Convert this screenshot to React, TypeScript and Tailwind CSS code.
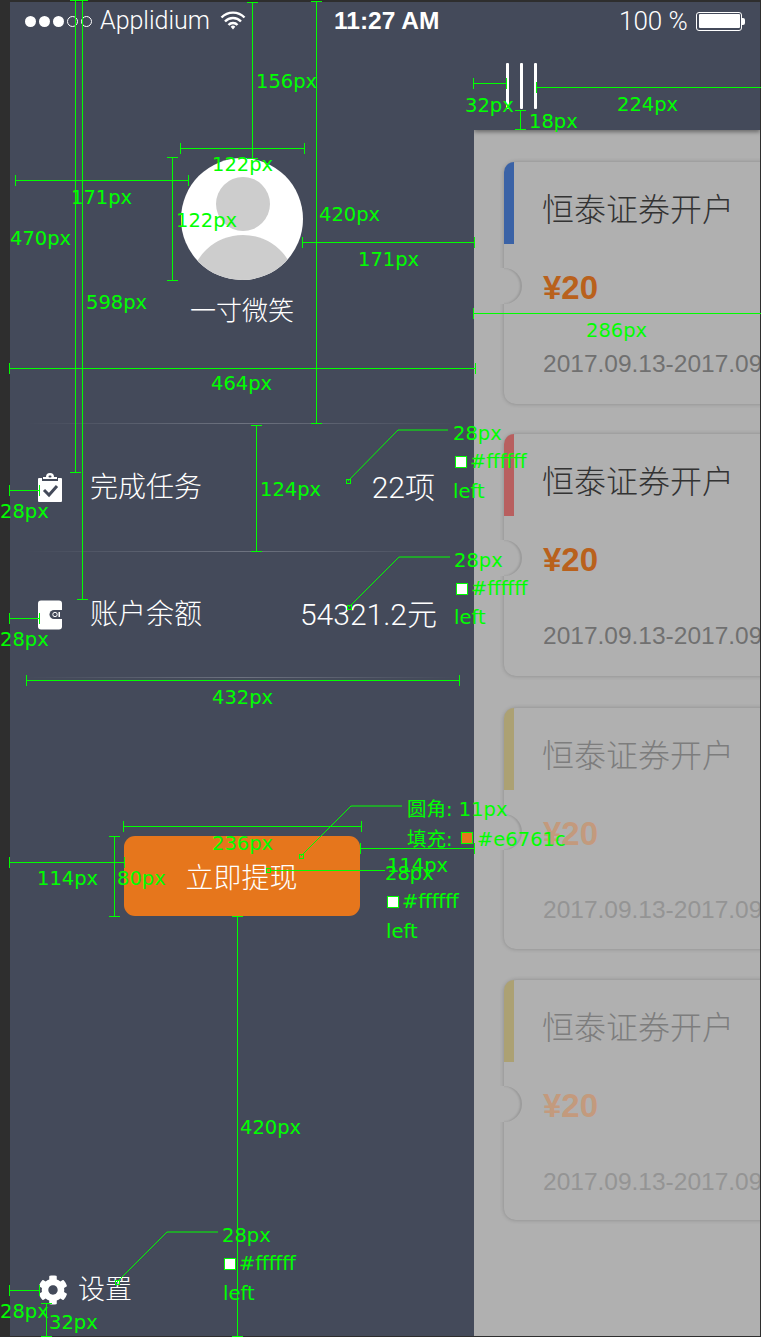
import { FaCog } from 'react-icons/fa';

const CJK = "font-['Liberation_Sans','Noto_Sans_CJK_SC',sans-serif]";
const LIGHT = "font-['Roboto','Noto_Sans_CJK_SC',sans-serif] font-light";

const CARDS = [
  { top: 'mt-[32px] h-[242px]', bar: 'bg-[#3a62a6]', title: 'text-[#333333]', price: 'text-[#b9611c]', date: 'text-[#707070]' },
  { top: 'mt-[30px] h-[242px]', bar: 'bg-[#b85f5f]', title: 'text-[#333333]', price: 'text-[#b9611c]', date: 'text-[#707070]' },
  { top: 'mt-[32px] h-[241px]', bar: 'bg-[#aca173]', title: 'text-[#7d7d7d]', price: 'text-[#c39a7d]', date: 'text-[#949494]' },
  { top: 'mt-[31px] h-[240px]', bar: 'bg-[#aca173]', title: 'text-[#7d7d7d]', price: 'text-[#c39a7d]', date: 'text-[#949494]' },
];

// measurement overlay
const V_LINES = [
  [75, 0, 472], [82, 0, 599], [252, 2, 158], [316, 1, 423], [256, 425, 551], [114, 836, 916],
  [237, 916, 1336], [46, 1303, 1336], [172, 157, 280], [520, 110, 129],
];
const H_LINES = [
  [148, 180, 304], [180, 15, 188], [242, 302, 474], [83, 473, 506], [87, 536, 761], [313, 473, 761],
  [368, 9, 475], [680, 26, 459], [490, 9, 39], [618, 9, 39], [862, 9, 124], [848, 360, 474], [826, 123, 361], [1290, 9, 39],
];
const LEADERS = [
  [348, 481, 398, 430, 448],
  [349, 607, 399, 557, 450],
  [301, 856, 351, 806, 402],
  [117, 1282, 167, 1232, 218],
];

const LABELS: [number, number, string][] = [
  [256, 70, '156px'], [212, 153, '122px'], [71, 186, '171px'], [176, 209, '122px'], [319, 203, '420px'],
  [10, 227, '470px'], [358, 248, '171px'], [86, 291, '598px'], [465, 94, '32px'], [617, 93, '224px'],
  [529, 110, '18px'], [586, 319, '286px'], [211, 372, '464px'], [453, 422, '28px'], [260, 478, '124px'],
  [0, 500, '28px'], [454, 549, '28px'], [0, 628, '28px'], [212, 686, '432px'], [212, 832, '236px'],
  [37, 867, '114px'], [117, 867, '80px'], [387, 854, '114px'], [385, 862, '28px'], [240, 1116, '420px'],
  [222, 1224, '28px'], [0, 1300, '28px'], [49, 1311, '32px'], [407, 798, '圆角: 11px'], [407, 828, '填充: '],
  [477, 828, '#e6761c'],
  [453, 480, 'left'], [454, 606, 'left'], [386, 920, 'left'], [223, 1282, 'left'],
];

const SWATCHES = [
  [455, 456, '#ffffff', 470, '#ffffff'],
  [456, 583, '#ffffff', 471, '#ffffff'],
  [387, 896, '#ffffff', 402, '#ffffff'],
  [224, 1258, '#ffffff', 239, '#ffffff'],
] as const;

function ClipboardIcon() {
  return (
    <svg width="24" height="30" viewBox="0 0 24 30" className="shrink-0">
      <path d="M8 4a4 4 0 0 1 8 0h3v2H5V4z" fill="#fff" />
      <rect x="10.5" y="2.5" width="3" height="2" rx="1" fill="#444a5a" />
      <path d="M1 5h3v3h16V5h3a1 1 0 0 1 1 1v22a1 1 0 0 1-1 1H1a1 1 0 0 1-1-1V6a1 1 0 0 1 1-1z" fill="#fff" />
      <path d="M6 17l5 5 8-9" fill="none" stroke="#444a5a" strokeWidth="3" />
    </svg>
  );
}

function WalletIcon() {
  return (
    <svg width="24" height="30" viewBox="0 0 24 30" className="shrink-0">
      <rect width="24" height="29" rx="3" y="0.5" fill="#fff" />
      <path d="M24 10h-8a4.500 4.500 0 0 0 0 9h8z" fill="#444a5a" />
      <circle cx="17" cy="14.500" r="2.200" fill="none" stroke="#fff" strokeWidth="1" />
      <rect x="20.500" y="12" width="1.500" height="5" fill="#fff" />
    </svg>
  );
}

function Avatar() {
  return (
    <svg width="122" height="122" viewBox="0 0 122 122" className="shrink-0">
      <defs>
        <clipPath id="avatarClip">
          <circle cx="61" cy="61" r="61" />
        </clipPath>
      </defs>
      <circle cx="61" cy="61" r="61" fill="#fff" />
      <circle cx="62" cy="46" r="27" fill="#cdcdcd" />
      <ellipse cx="62" cy="127" rx="52" ry="50" fill="#cdcdcd" clipPath="url(#avatarClip)" />
    </svg>
  );
}

function StatusBar() {
  return (
    <div className="flex h-[44px] items-center bg-[#444a5a] pb-[6px] text-white font-['Liberation_Sans',sans-serif]">
      <div className="ml-[15px] flex items-center gap-[3px]">
        {[0, 1, 2].map((i) => (
          <span key={i} className="h-[11px] w-[11px] rounded-full bg-white" />
        ))}
        {[0, 1].map((i) => (
          <span key={i} className="h-[11px] w-[11px] rounded-full border border-white" />
        ))}
      </div>
      <span className={`ml-[8px] w-[112px] text-[25px] ${LIGHT}`}>Applidium</span>
      <svg width="26" height="20" viewBox="0 0 26 20" className="ml-[8px]">
        <path d="M1.500 6.500a16 16 0 0 1 23 0M5 10.500a11 11 0 0 1 16 0M8.500 14a6 6 0 0 1 9 0" fill="none" stroke="#fff" strokeWidth="2.400" />
        <path d="M10.700 15.800a3.200 3.200 0 0 1 4.600 0L13 18.500z" fill="#fff" />
      </svg>
      <span className="ml-[88px] w-[120px] text-[24.500px] font-bold whitespace-nowrap">11:27 AM</span>
      <span className={`ml-[165px] w-[69px] text-[26px] whitespace-nowrap ${LIGHT}`}>100 %</span>
      <div className="ml-[8px] flex items-center">
        <div className="h-[19px] w-[46px] rounded-[3px] border border-white p-[1.500px]">
          <div className="h-full w-full rounded-[1px] bg-white" />
        </div>
        <div className="h-[7px] w-[3px] rounded-r-[2px] bg-white" />
      </div>
    </div>
  );
}

function Divider() {
  return <div className="mx-[16px] h-[1px] bg-gradient-to-r from-[#444a5a] via-[#6e7380] to-[#444a5a]" />;
}

function Sidebar() {
  return (
    <aside className={`flex w-[464px] shrink-0 flex-col bg-[#444a5a] text-white ${CJK}`}>
      <div className="flex flex-col items-center pt-[112px]">
        <Avatar />
        <span className="mt-[13px] text-[26px] leading-[36px] font-light">一寸微笑</span>
      </div>
      <div className="mt-[94px]">
        <Divider />
        <div className="flex h-[127px] items-center pl-[28px] pr-[39px]">
          <ClipboardIcon />
          <span className="ml-[28px] text-[28px] font-light">完成任务</span>
          <span className={`ml-auto text-[30px] ${LIGHT}`}>22项</span>
        </div>
        <Divider />
        <div className="flex h-[125px] items-center pl-[28px] pr-[37px]">
          <WalletIcon />
          <span className="ml-[28px] text-[28px] font-light">账户余额</span>
          <span className={`ml-auto text-[30px] ${LIGHT}`}>54321.2元</span>
        </div>
        <Divider />
      </div>
      <div className="mt-[158px] flex justify-center pr-[1px]">
        <button className="flex h-[80px] w-[236px] items-center justify-center rounded-[11px] bg-[#e6761c] pt-[5px] text-[28px] font-light text-white">
          立即提现
        </button>
      </div>
      <div className="mt-auto mb-[26px] flex items-center pl-[28px]">
        <FaCog className="h-[30px] w-[30px] shrink-0 text-white" />
        <span className="ml-[10px] text-[27px] font-light">设置</span>
      </div>
    </aside>
  );
}

function Coupon({ card }: { card: (typeof CARDS)[number] }) {
  return (
    <div className={`relative ml-[30px] w-[300px] shrink-0 rounded-[12px] bg-[#b0b0b0] shadow-[0_0_4px_rgba(0,0,0,0.22)] ${card.top}`}>
      <div className={`h-[82px] w-[10px] rounded-tl-[12px] ${card.bar}`} />
      <span className="absolute top-[106px] left-[-6px] h-[36px] w-[7px] bg-[#b0b0b0]" />
      <span className="absolute top-[106px] left-0 h-[36px] w-[18px] rounded-r-full bg-[#b0b0b0] shadow-[inset_-2px_0_2px_rgba(0,0,0,0.13)]" />
      <div className="absolute top-[26px] left-[39px] whitespace-nowrap">
        <div className={`-ml-[1px] text-[32px] leading-[44px] font-light ${card.title}`}>恒泰证券开户</div>
        <div className={`mt-[36px] text-[33px] leading-[40px] font-bold ${card.price}`}>¥20</div>
        <div className={`mt-[40px] text-[24.500px] leading-[32px] ${card.date}`}>2017.09.13-2017.09.13</div>
      </div>
    </div>
  );
}

function RightPanel() {
  return (
    <section className={`flex min-w-0 flex-1 flex-col overflow-hidden bg-[#b0b0b0] ${CJK}`}>
      <div className="flex h-[84px] shrink-0 gap-[11px] bg-[#444a5a] pt-[17px] pl-[32px] shadow-[0_2px_4px_rgba(0,0,0,0.4)]">
        {[0, 1, 2].map((i) => (
          <span key={i} className="h-[46px] w-[3px] rounded-[1px] bg-white" />
        ))}
      </div>
      {CARDS.map((card, i) => (
        <Coupon key={i} card={card} />
      ))}
    </section>
  );
}

function Annotations() {
  return (
    <div className="absolute inset-0 overflow-hidden text-[19.500px] leading-[24px] text-[#00ff00] font-['DejaVu_Sans','Noto_Sans_CJK_SC',sans-serif]">
      <svg width="761" height="1337" className="absolute inset-0" stroke="#00ff00" strokeWidth="1" fill="none" shapeRendering="crispEdges">
        {V_LINES.map(([x, a, b], i) => (
          <g key={i}>
            <path d={`M${x + 0.5} ${a}V${b}`} />
            <path d={`M${x - 5} ${a + 0.5}h11M${x - 5} ${b + 0.5}h11`} />
          </g>
        ))}
        {H_LINES.map(([y, a, b], i) => (
          <g key={i}>
            <path d={`M${a} ${y + 0.5}H${b}`} />
            <path d={`M${a + 0.5} ${y - 5}v11M${b + 0.5} ${y - 5}v11`} />
          </g>
        ))}
        <path d="M270 870.500H385" />
        {LEADERS.map(([x1, y1, x2, y2, x3], i) => (
          <g key={i}>
            <rect x={x1 - 2} y={y1 - 2} width="4" height="4" />
            <path d={`M${x1} ${y1}L${x2} ${y2}H${x3}`} shapeRendering="auto" />
          </g>
        ))}
        <rect x="266.500" y="868.500" width="4" height="4" />
      </svg>
      {LABELS.map(([x, y, text], i) => (
        <span key={i} className="absolute whitespace-nowrap" style={{ left: x, top: y }}>
          {text}
        </span>
      ))}
      {SWATCHES.map(([x, y, fill, tx, text], i) => (
        <div key={i}>
          <span className="absolute h-[12px] w-[12px] border border-[#00ff00]" style={{ left: x, top: y, background: fill }} />
          <span className="absolute whitespace-nowrap" style={{ left: tx, top: y - 6 }}>
            {text}
          </span>
        </div>
      ))}
      <span className="absolute top-[832px] left-[461px] h-[12px] w-[12px] border border-[#00ff00] bg-[#e6761c]" />
    </div>
  );
}

export default function App() {
  return (
    <div className="relative flex h-[1337px] w-[761px] overflow-hidden bg-[#2e2e2e]">
      <div className="ml-[10px] mt-[2px] mb-[1px] mr-[1px] flex min-w-0 flex-1 flex-col">
        <StatusBar />
        <div className="flex min-h-0 flex-1">
          <Sidebar />
          <RightPanel />
        </div>
      </div>
      <Annotations />
    </div>
  );
}
